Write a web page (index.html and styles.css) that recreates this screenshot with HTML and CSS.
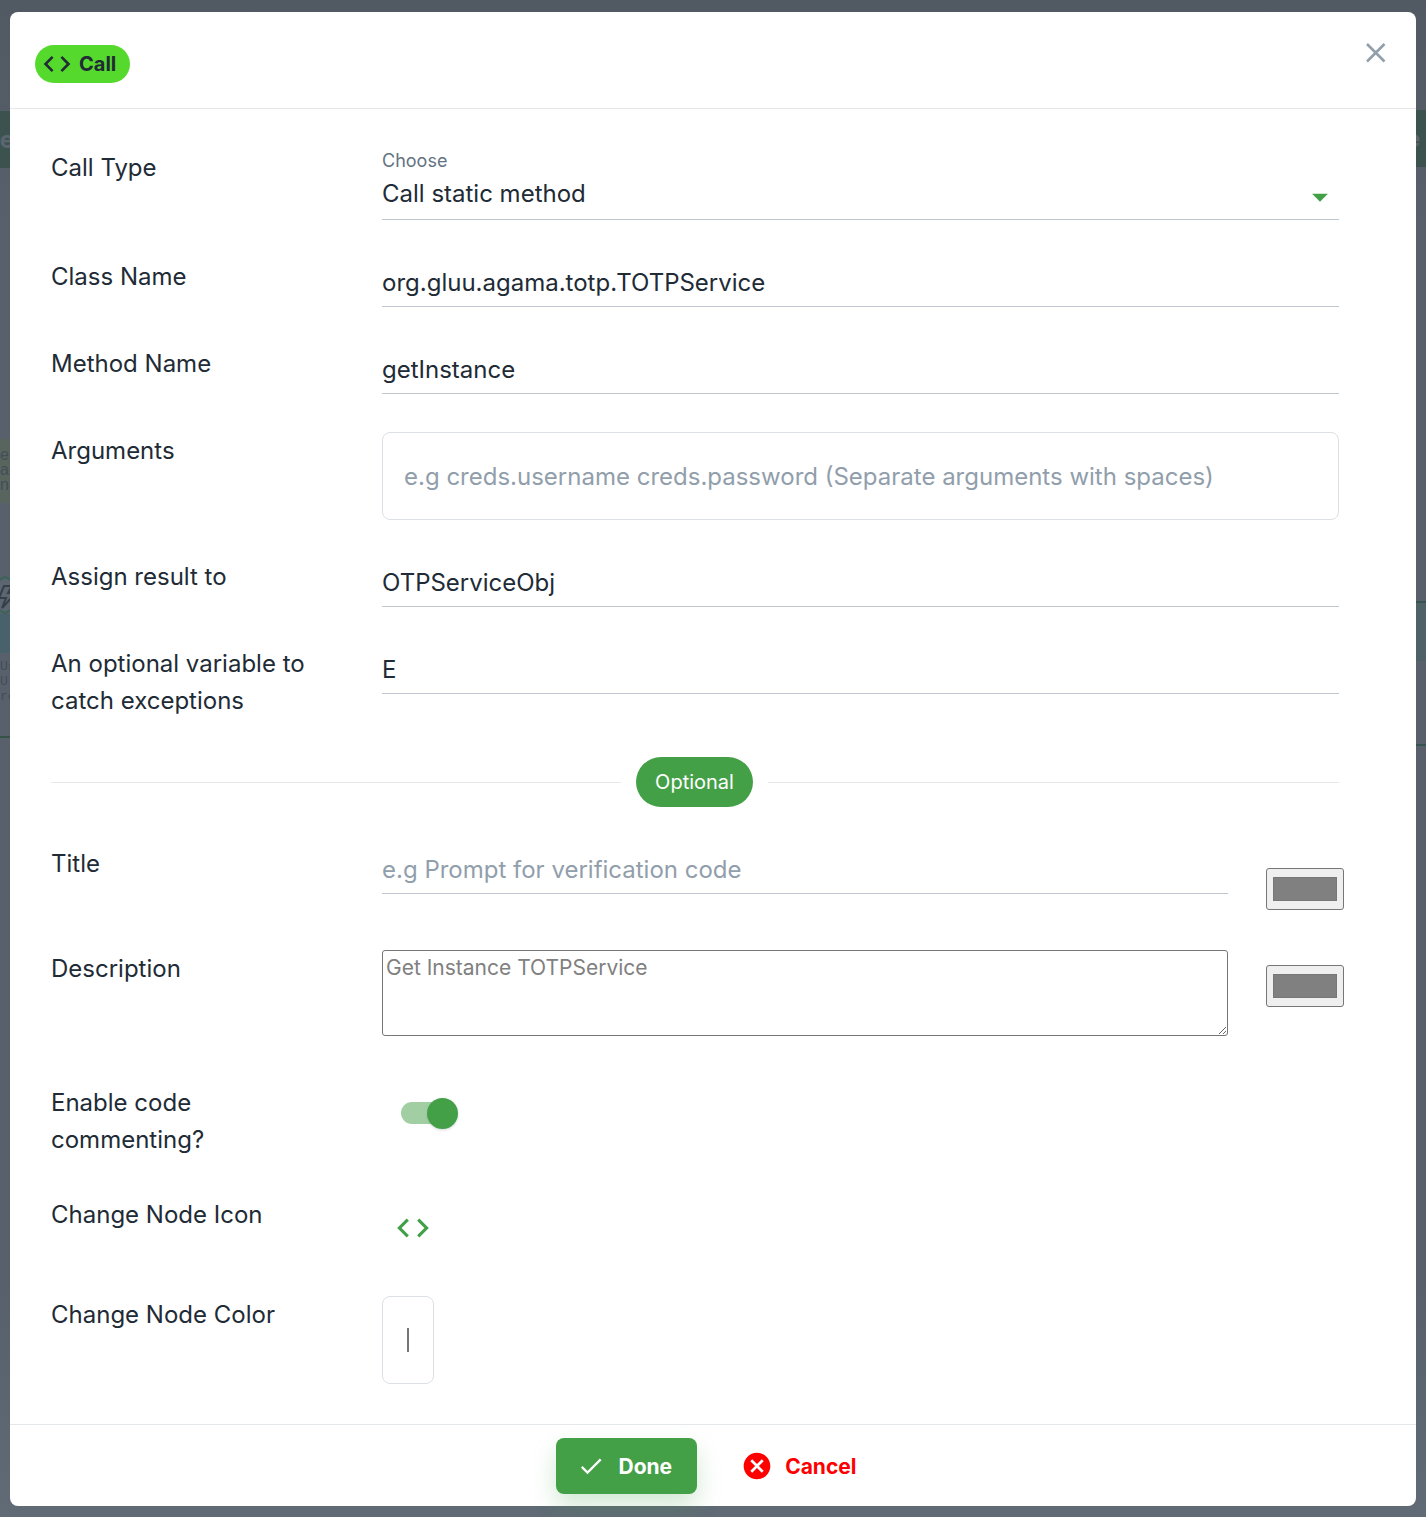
FILE: index.html
```html
<!DOCTYPE html>
<html lang="en">
<head>
<meta charset="utf-8">
<meta name="viewport" content="width=device-width, initial-scale=1">
<title>Call node</title>
<link rel="stylesheet" href="styles.css">
</head>
<body>
<div class="canvas" aria-hidden="true">
  <div class="node node-start">e</div>
  <div class="node node-note">er<br>ac<br>ne</div>
  <svg class="node node-hex" viewBox="0 0 36 40"><path d="M18 2 33 10v20l-15 8L3 30V10z" fill="#5c6670" stroke="#3c6358" stroke-width="2"/><path d="M17 11h8l-4 7h8L15 33l4-10h-7z" fill="none" stroke="#353f4a" stroke-width="2"/></svg>
  <div class="node node-band"></div>
  <div class="node node-text">Us<br>U<br>ro</div>
  <div class="node node-line"></div>
  <div class="node node-end">e</div>
  <div class="node node-card"></div>
</div>
<main class="dialog" role="dialog" aria-label="Call">
  <header class="dialog-header">
    <h1 class="badge">
      <svg width="32" height="32" viewBox="0 0 24 24" fill="currentColor" aria-hidden="true"><path d="M9.4 16.6 4.8 12l4.6-4.6L8 6l-6 6 6 6 1.4-1.4zm5.2 0 4.6-4.6-4.6-4.6L16 6l6 6-6 6-1.4-1.4z"/></svg>
      Call
    </h1>
    <button class="close" type="button" aria-label="Close">
      <svg width="36" height="36" viewBox="0 0 36 36" fill="none" stroke="currentColor" stroke-width="2.6" aria-hidden="true"><path d="m9 10 17.500 17.500M26.500 10 9 27.500"/></svg>
    </button>
  </header>

  <form class="dialog-form" id="node-form">
    <div class="row">
      <label class="label" for="type">Call Type</label>
      <div class="select-field">
        <span class="hint">Choose</span>
        <select class="select" id="type"><option>Call static method</option></select>
        <svg class="caret" width="38" height="38" viewBox="0 0 24 24" fill="currentColor" aria-hidden="true"><path d="m7 10 5 5 5-5z"/></svg>
      </div>
    </div>
    <div class="row">
      <label class="label" for="class">Class Name</label>
      <input class="line-input" id="class" type="text" value="org.gluu.agama.totp.TOTPService">
    </div>
    <div class="row">
      <label class="label" for="method">Method Name</label>
      <input class="line-input" id="method" type="text" value="getInstance">
    </div>
    <div class="row">
      <label class="label" for="args">Arguments</label>
      <input class="box-input" id="args" type="text" placeholder="e.g creds.username creds.password (Separate arguments with spaces)">
    </div>
    <div class="row">
      <label class="label" for="assign">Assign result to</label>
      <input class="line-input" id="assign" type="text" value="OTPServiceObj">
    </div>
    <div class="row">
      <label class="label" for="catch">An optional variable to catch exceptions</label>
      <input class="line-input" id="catch" type="text" value="E">
    </div>

    <div class="divider"><span class="pill">Optional</span></div>

    <div class="row row-title">
      <label class="label" for="title">Title</label>
      <div class="pair">
        <input class="line-input" id="title" type="text" placeholder="e.g Prompt for verification code">
        <input class="swatch swatch-low" type="color" value="#808080" aria-label="Title color">
      </div>
    </div>
    <div class="row row-description">
      <label class="label" for="description">Description</label>
      <div class="pair">
        <textarea class="textarea" id="description">Get Instance TOTPService</textarea>
        <input class="swatch" type="color" value="#808080" aria-label="Description color">
      </div>
    </div>
    <div class="row">
      <label class="label" for="comment">Enable code commenting?</label>
      <div class="control"><input class="switch" id="comment" type="checkbox" checked></div>
    </div>
    <div class="row row-icon">
      <label class="label" for="icon">Change Node Icon</label>
      <div class="control">
        <button class="icon-button" id="icon" type="button" aria-label="Change Node Icon">
          <svg width="38" height="38" viewBox="0 0 24 24" fill="currentColor" aria-hidden="true"><path d="M9.4 16.6 4.8 12l4.6-4.6L8 6l-6 6 6 6 1.4-1.4zm5.2 0 4.6-4.6-4.6-4.6L16 6l6 6-6 6-1.4-1.4z"/></svg>
        </button>
      </div>
    </div>
    <div class="row">
      <label class="label" for="color">Change Node Color</label>
      <div class="color-box"><input class="color-bar" id="color" type="color" value="#777777"></div>
    </div>
  </form>

  <footer class="dialog-footer">
    <button class="button done" type="submit" form="node-form">
      <svg width="28" height="28" viewBox="0 0 24 24" fill="currentColor" aria-hidden="true"><path d="M9 16.2 4.8 12l-1.4 1.4L9 19 21 7l-1.4-1.4z"/></svg>
      Done
    </button>
    <button class="button cancel" type="button">
      <svg width="32" height="32" viewBox="0 0 24 24" fill="currentColor" aria-hidden="true"><path d="M12 2C6.47 2 2 6.47 2 12s4.47 10 10 10 10-4.47 10-10S17.53 2 12 2zm5 13.59L15.59 17 12 13.41 8.41 17 7 15.59 10.59 12 7 8.41 8.41 7 12 10.59 15.59 7 17 8.41 13.41 12 17 15.59z"/></svg>
      Cancel
    </button>
  </footer>
</main>
</body>
</html>
```
FILE: styles.css
```css
* { box-sizing: border-box; }

body {
  margin: 0;
  padding: 12px 10px 11px;
  position: relative;
  overflow-x: hidden;
  min-height: 100vh;
  background: linear-gradient(#515962, #57606b 15%, #57606b 85%, #606b75);
  color: #212b36;
  font-family: Inter, "Liberation Sans", sans-serif;
  font-size: 24px;
  line-height: 37px;
}

button, input, select, textarea { font: inherit; color: inherit; margin: 0; }
svg { display: block; flex: none; }

/* Dimmed flow diagram behind the dialog */
.canvas { position: absolute; inset: 0; z-index: 0; overflow: hidden; }
.node { position: absolute; color: #434d58; }
.node-start, .node-end {
  width: 200px;
  height: 57px;
  background: #3c524e;
  color: #5b6570;
  font-size: 24px;
  line-height: 57px;
  font-weight: 700;
}
.node-start { right: calc(100% - 14px); top: 111px; text-align: right; }
.node-end { left: calc(100% - 20px); top: 110px; }
.node-note {
  left: 0;
  top: 439px;
  width: 40px;
  height: 64px;
  padding-top: 8px;
  background: #58655f;
  font: 16px/15px "Liberation Sans", sans-serif;
}
.node-hex { left: -13px; top: 575px; width: 36px; height: 40px; z-index: 1; }
.node-band { left: 0; top: 614px; width: 40px; height: 39px; background: #48616b; }
.node-text { left: 0; top: 659px; font: 13px/15px "Liberation Mono", monospace; }
.node-line { left: 0; top: 736px; width: 40px; height: 2px; background: #355347; }
.node-card {
  right: 0;
  top: 601px;
  width: 40px;
  height: 145px;
  border: solid #355450;
  border-width: 2px 0;
  background: linear-gradient(#4e6166 58px, transparent 58px);
}

.dialog {
  position: relative;
  z-index: 1;
  background: #fff;
  border-radius: 8px;
}
.dialog-header {
  display: flex;
  justify-content: space-between;
  align-items: flex-start;
  padding: 22px 22px 25px 25px;
  border-bottom: 1px solid #e5e8eb;
}
.badge {
  display: flex;
  align-items: center;
  gap: 6px;
  height: 38px;
  margin: 11px 0 0;
  padding: 0 14px 0 6px;
  border-radius: 19px;
  background: #55d92c;
  font-size: 20px;
  font-weight: 700;
}
.close {
  padding: 0;
  border: 0;
  background: none;
  color: #919eab;
}

.dialog-form {
  display: flex;
  flex-direction: column;
  gap: 38px;
  padding: 40px 77px 40px 41px;
}
.row {
  display: grid;
  grid-template-columns: 3fr 9fr;
  gap: 12px;
  align-items: start;
}
.label { padding-right: 48px; }
.row-title { min-height: 67px; }
.row-description { min-height: 96px; }
.row-icon { min-height: 62px; }

.line-input, .box-input, .select {
  display: block;
  width: 100%;
  min-width: 0;
  padding: 0;
  border: 0;
  outline: 0;
  border-radius: 0;
  background: none;
}
.line-input {
  height: 49px;
  border-bottom: 1px solid #bec7cf;
}
.box-input {
  height: 88px;
  padding: 0 21px;
  border: 1px solid #dce0e4;
  border-radius: 8px;
}
.line-input::placeholder, .box-input::placeholder { color: #919eab; opacity: 1; }

.select-field { position: relative; }
.hint {
  display: block;
  color: #637381;
  font-size: 18px;
  line-height: 24px;
}
.select {
  appearance: none;
  height: 47px;
  padding-bottom: 6px;
  border-bottom: 1px solid #bec7cf;
}
.caret {
  position: absolute;
  right: 0;
  bottom: 4px;
  color: #43a047;
  pointer-events: none;
}

.divider {
  display: flex;
  align-items: center;
  gap: 15px;
}
.divider::before, .divider::after {
  content: "";
  height: 1px;
  background: #e5e8eb;
}
.divider::before { flex: 570; }
.divider::after { flex: 571; }
.pill {
  padding: 0 19px;
  border-radius: 25px;
  background: #43a047;
  color: #fff;
  font-size: 20px;
  line-height: 50px;
}

.pair {
  display: grid;
  grid-template-columns: 1fr 78px;
  gap: 38px;
  align-items: start;
  margin-right: -5px;
}
.swatch {
  width: 78px;
  height: 42px;
  margin-top: 15px;
  padding: 4px;
  border: 1px solid #767676;
  border-radius: 3px;
  background: #efefef;
}
.swatch-low { margin-top: 23px; }
.textarea {
  display: block;
  width: 100%;
  height: 86px;
  padding: 3px;
  border: 1px solid #767676;
  border-radius: 3px;
  background: #fff;
  color: #808080;
  font-size: 21px;
  line-height: 27px;
}

.control { padding: 14px 0 0 19px; }
.row-icon .control { padding: 13px 0 0 12px; }
.switch {
  appearance: none;
  display: block;
  position: relative;
  width: 57px;
  height: 31px;
}
.switch::before {
  content: "";
  display: block;
  position: absolute;
  inset: 4px 4px 5px 0;
  border-radius: 11px;
  background: #a1cfa3;
}
.switch::after {
  content: "";
  position: absolute;
  right: 0;
  top: 0;
  width: 31px;
  height: 31px;
  border-radius: 50%;
  background: #43a047;
  box-shadow: 0 1px 3px #919eab66;
}
.icon-button {
  display: block;
  padding: 0;
  border: 0;
  background: none;
  color: #43a047;
}
.color-box {
  display: flex;
  align-items: center;
  justify-content: center;
  width: 52px;
  height: 88px;
  border: 1px solid #dce0e4;
  border-radius: 8px;
}
.color-bar {
  appearance: none;
  width: 2px;
  height: 24px;
  padding: 0;
  border: 0;
  background: #767676;
}

.dialog-footer {
  display: flex;
  justify-content: center;
  gap: 30px;
  padding: 13px 0 12px;
  border-top: 1px solid #e5e8eb;
}
.button {
  display: flex;
  align-items: center;
  height: 56px;
  padding: 0 14px;
  border: 0;
  border-radius: 8px;
  background: none;
  font-size: 21px;
  font-weight: 700;
}
.done {
  gap: 14px;
  padding: 0 25px 0 21px;
  background: #43a047;
  color: #fff;
  box-shadow: 0 12px 25px #43a0473d;
}
.cancel { gap: 12px; color: #f00; }
```
